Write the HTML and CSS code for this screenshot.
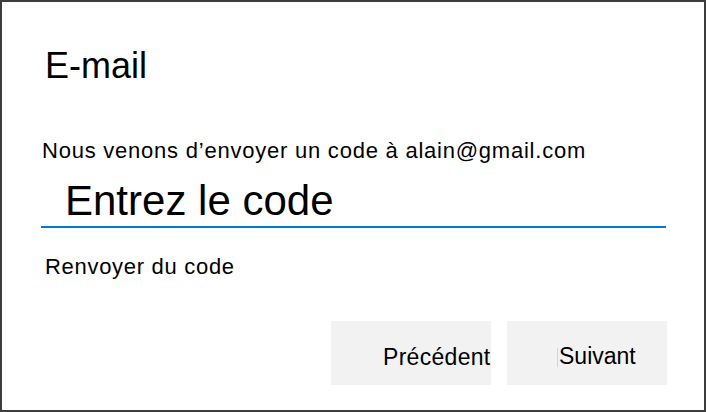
FILE: index.html
```html
<!DOCTYPE html>
<html>
<head>
    <title>E-mail</title>
    <link rel="stylesheet" href="styles.css">
</head>
<body>
    <div class="dialog">
        <h1 class="title">E-mail</h1>
        <p class="message">Nous venons d’envoyer un code à alain@gmail.com</p>
        <div class="code-field">
            <span class="placeholder">Entrez le code</span>
        </div>
        <a class="resend" href="#">Renvoyer du code</a>
        <div class="button-row">
            <button class="button">Précédent</button>
            <button class="button button-next">Suivant</button>
        </div>
    </div>
</body>
</html>
```

FILE: styles.css
```css
body {
    margin: 0;
    font-family: "Liberation Sans", Arial, sans-serif;
    color: #000;
    background-color: #fff;
}
.dialog {
    box-sizing: border-box;
    width: 706px;
    height: 412px;
    border: 2px solid #3c3c3c;
    padding: 44px 0 0 39px;
    display: flex;
    flex-direction: column;
    align-items: flex-start;
}
.title {
    margin: 0 0 0 4px;
    font-size: 36px;
    line-height: 40px;
    font-weight: normal;
}
.message {
    margin: 52px 0 0 1px;
    font-size: 22px;
    line-height: 26px;
    letter-spacing: 0.77px;
}
.code-field {
    box-sizing: border-box;
    width: 625px;
    margin-top: 14px;
    padding: 0 0 2px 24px;
    border-bottom: 2px solid #0078d7;
}
.placeholder {
    display: block;
    font-size: 42px;
    line-height: 46px;
}
.resend {
    margin: 26px 0 0 4px;
    font-size: 22px;
    line-height: 26px;
    letter-spacing: 0.7px;
    color: #000;
    text-decoration: none;
}
.button-row {
    width: 626px;
    margin-top: 41px;
    display: flex;
    justify-content: flex-end;
    gap: 16px;
}
.button {
    box-sizing: border-box;
    width: 160px;
    height: 64px;
    padding: 8px 0 0 52px;
    border: none;
    background-color: #f2f2f2;
    font-family: inherit;
    font-size: 23px;
    line-height: 56px;
    letter-spacing: 0.3px;
    color: #000;
    text-align: left;
    white-space: nowrap;
    overflow: hidden;
    cursor: pointer;
}
.button-next {
    padding-left: 50px;
    padding-top: 6px;
    letter-spacing: 0;
}
.button-next::before {
    content: "";
    display: inline-block;
    width: 1px;
    height: 19px;
    margin-right: 1px;
    vertical-align: -3px;
    background-color: #d4d4d4;
}
```
